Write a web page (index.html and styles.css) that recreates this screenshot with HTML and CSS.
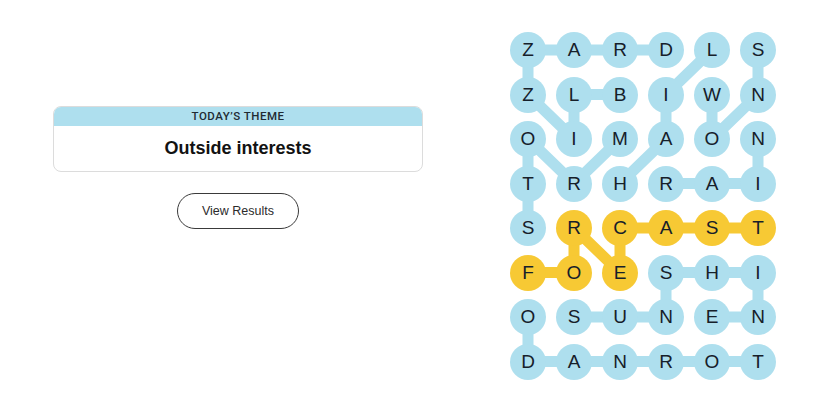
FILE: index.html
```html
<!DOCTYPE html>
<html lang="en">
<head>
<meta charset="utf-8">
<title>Strands</title>
<link rel="stylesheet" href="styles.css">
</head>
<body>
<main class="page">
  <section class="side">
    <div class="theme-card">
      <div class="theme-head">TODAY’S THEME</div>
      <div class="theme-body">Outside interests</div>
    </div>
    <button class="results-btn">View Results</button>
  </section>
  <section class="board">
    <svg class="links" width="266" height="348" viewBox="0 0 266 348">
      <g stroke="#aedfee" stroke-width="11" stroke-linecap="round">
        <!-- BLIZZARD -->
        <line x1="110" y1="62.5" x2="64" y2="62.5"/>
        <line x1="64" y1="62.5" x2="64" y2="107"/>
        <line x1="64" y1="107" x2="18" y2="62.5"/>
        <line x1="18" y1="62.5" x2="18" y2="18"/>
        <line x1="18" y1="18" x2="156" y2="18"/>
        <!-- SNOW -->
        <line x1="248" y1="18" x2="248" y2="62.5"/>
        <line x1="248" y1="62.5" x2="202" y2="107"/>
        <line x1="202" y1="107" x2="202" y2="62.5"/>
        <!-- HAIL -->
        <line x1="110" y1="151.5" x2="156" y2="107"/>
        <line x1="156" y1="107" x2="156" y2="62.5"/>
        <line x1="156" y1="62.5" x2="202" y2="18"/>
        <!-- STORM -->
        <line x1="18" y1="196" x2="18" y2="107"/>
        <line x1="18" y1="107" x2="64" y2="151.5"/>
        <line x1="64" y1="151.5" x2="110" y2="107"/>
        <!-- RAIN -->
        <line x1="156" y1="151.5" x2="248" y2="151.5"/>
        <line x1="248" y1="151.5" x2="248" y2="107"/>
        <!-- SUNSHINE -->
        <line x1="64" y1="285" x2="156" y2="285"/>
        <line x1="156" y1="285" x2="156" y2="240.5"/>
        <line x1="156" y1="240.5" x2="248" y2="240.5"/>
        <line x1="248" y1="240.5" x2="248" y2="285"/>
        <line x1="248" y1="285" x2="202" y2="285"/>
        <!-- TORNADO -->
        <line x1="248" y1="329.5" x2="18" y2="329.5"/>
        <line x1="18" y1="329.5" x2="18" y2="285"/>
      </g>
      <g stroke="#f7c934" stroke-width="11" stroke-linecap="round">
        <!-- FORECAST -->
        <line x1="18" y1="240.5" x2="64" y2="240.5"/>
        <line x1="64" y1="240.5" x2="64" y2="196"/>
        <line x1="64" y1="196" x2="110" y2="240.5"/>
        <line x1="110" y1="240.5" x2="110" y2="196"/>
        <line x1="110" y1="196" x2="248" y2="196"/>
      </g>
    </svg>
    <div class="grid">
      <span class="cell">Z</span><span class="cell">A</span><span class="cell">R</span><span class="cell">D</span><span class="cell">L</span><span class="cell">S</span>
      <span class="cell">Z</span><span class="cell">L</span><span class="cell">B</span><span class="cell">I</span><span class="cell">W</span><span class="cell">N</span>
      <span class="cell">O</span><span class="cell">I</span><span class="cell">M</span><span class="cell">A</span><span class="cell">O</span><span class="cell">N</span>
      <span class="cell">T</span><span class="cell">R</span><span class="cell">H</span><span class="cell">R</span><span class="cell">A</span><span class="cell">I</span>
      <span class="cell">S</span><span class="cell gold">R</span><span class="cell gold">C</span><span class="cell gold">A</span><span class="cell gold">S</span><span class="cell gold">T</span>
      <span class="cell gold">F</span><span class="cell gold">O</span><span class="cell gold">E</span><span class="cell">S</span><span class="cell">H</span><span class="cell">I</span>
      <span class="cell">O</span><span class="cell">S</span><span class="cell">U</span><span class="cell">N</span><span class="cell">E</span><span class="cell">N</span>
      <span class="cell">D</span><span class="cell">A</span><span class="cell">N</span><span class="cell">R</span><span class="cell">O</span><span class="cell">T</span>
    </div>
  </section>
</main>
</body>
</html>
```

FILE: styles.css
```css
* { box-sizing: border-box; }

html, body {
  margin: 0;
  padding: 0;
  background: #ffffff;
}

body {
  font-family: "Liberation Sans", Arial, sans-serif;
  color: #121212;
}

.page {
  display: flex;
  width: 825px;
  height: 413px;
}

.side {
  display: flex;
  flex-direction: column;
  align-items: center;
  width: 370px;
  margin-left: 53px;
  padding-top: 106px;
}

.theme-card {
  width: 370px;
  border: 1px solid #dcdcdc;
  border-radius: 8px;
  overflow: hidden;
}

.theme-head {
  background: #aedfee;
  height: 19px;
  line-height: 19px;
  text-align: center;
  font-family: Roboto, "Liberation Sans", sans-serif;
  font-size: 11.5px;
  font-weight: 500;
  letter-spacing: 0.5px;
  color: #1f2b33;
}

.theme-body {
  height: 45px;
  line-height: 44px;
  text-align: center;
  font-size: 18px;
  font-weight: 700;
  color: #121212;
}

.results-btn {
  margin-top: 21px;
  width: 122px;
  height: 36px;
  border: 1px solid #3a3a3a;
  border-radius: 18px;
  background: #ffffff;
  font-family: "Liberation Sans", Arial, sans-serif;
  font-size: 12.5px;
  color: #2b2b2b;
  padding: 0;
}

.board {
  position: relative;
  margin-left: 87px;
  margin-top: 32px;
  width: 266px;
  height: 348px;
}

.links {
  position: absolute;
  left: 0;
  top: 0;
}

.grid {
  position: relative;
  display: grid;
  grid-template-columns: repeat(6, 36px);
  grid-template-rows: repeat(8, 36px);
  column-gap: 10px;
  row-gap: 8.5px;
}

.cell {
  width: 36px;
  height: 36px;
  border-radius: 50%;
  background: #aedfee;
  display: flex;
  align-items: center;
  justify-content: center;
  font-size: 19px;
  color: #16202a;
}

.cell.gold {
  background: #f7c934;
}
```
